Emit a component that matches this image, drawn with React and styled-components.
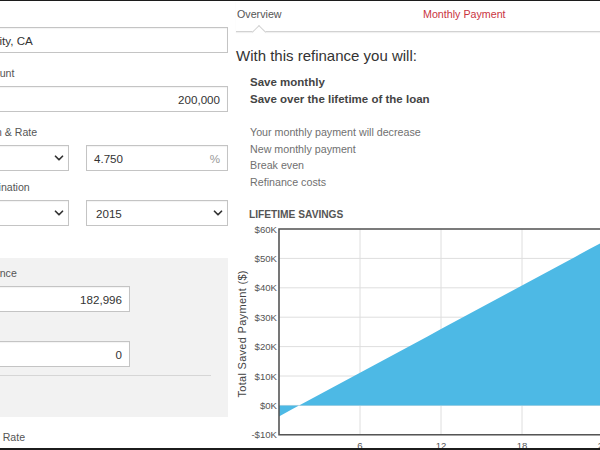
import React from 'react';
import styled, { createGlobalStyle } from 'styled-components';
import { ChevronDown } from 'lucide-react';

const GlobalStyle = createGlobalStyle`
  html, body {
    margin: 0;
    padding: 0;
    background: #fff;
    overflow: hidden;
  }
  body {
    font-family: "Liberation Sans", Arial, sans-serif;
    color: #333;
  }
`;

const savings = [];
for (let t = 0; t <= 25; t++) {
  savings.push({ year: t, value: -3.74 + 2.474 * t });
}

function App() {
  return (
    <Frame>
      <GlobalStyle />
      <Page>
        <FormColumn>
          <Field $gap={12}>
            <Label>Location</Label>
            <Box $pad={2}>
              <Value>Foster City, CA</Value>
            </Box>
          </Field>

          <Field $gap={12}>
            <Label>Loan Amount</Label>
            <Box>
              <Value $right>200,000</Value>
            </Box>
          </Field>

          <Field $gap={8}>
            <Label>Loan Term &amp; Rate</Label>
            <Pair>
              <Box $select>
                <Value>30 yr</Value>
                <ChevronDown size={14} strokeWidth={3} color="#333" />
              </Box>
              <Box>
                <Value>4.750</Value>
                <Suffix>%</Suffix>
              </Box>
            </Pair>
          </Field>

          <Field $gap={32}>
            <Label>Loan Origination</Label>
            <Pair>
              <Box $select>
                <Value>Jan</Value>
                <ChevronDown size={14} strokeWidth={3} color="#333" />
              </Box>
              <Box $select>
                <Value>2015</Value>
                <ChevronDown size={14} strokeWidth={3} color="#333" />
              </Box>
            </Pair>
          </Field>

          <Panel>
            <Field $gap={8}>
              <Label>Loan Balance</Label>
              <Box $width={178}>
                <Value $right>182,996</Value>
              </Box>
            </Field>
            <Field $gap={8}>
              <Label>Points</Label>
              <Box $width={178}>
                <Value $right>0</Value>
              </Box>
            </Field>
            <Divider />
          </Panel>

          <Field $gap={0} $top={12}>
            <Label>New Loan Rate</Label>
          </Field>
        </FormColumn>

        <ResultColumn>
          <TabBar>
            <Tab $active>Overview</Tab>
            <Tab $accent>Monthly Payment</Tab>
            <Tab>Amortization</Tab>
          </TabBar>

          <Heading>With this refinance you will:</Heading>

          <Highlights>
            <li>Save monthly</li>
            <li>Save over the lifetime of the loan</li>
          </Highlights>

          <Facts>
            <li>Your monthly payment will decrease</li>
            <li>New monthly payment</li>
            <li>Break even</li>
            <li>Refinance costs</li>
          </Facts>

          <SectionTitle>LIFETIME SAVINGS</SectionTitle>
          <SavingsChart data={savings} />
        </ResultColumn>
      </Page>
    </Frame>
  );
}

function SavingsChart({ data }) {
  const left = 43;
  const top = 7;
  const unitX = 13.5;
  const unitY = 2.94;
  const maxYear = 25;
  const x = (t) => left + t * unitX;
  const y = (v) => top + (60 - v) * unitY;
  const bottom = y(-10);
  const right = x(maxYear);
  const ticksY = [60, 50, 40, 30, 20, 10, 0, -10];
  const ticksX = [6, 12, 18, 24];

  const area = [
    `${x(0)},${y(0)}`,
    ...data.map((d) => `${x(d.year)},${y(d.value)}`),
    `${x(data[data.length - 1].year)},${y(0)}`,
  ].join(' ');

  const fmt = (v) => (v < 0 ? `-$${-v}K` : `$${v}K`);

  return (
    <ChartSvg width="460" height="228" viewBox="0 0 460 228">
      {ticksY.map((v) => (
        <line key={v} x1={left} x2={right} y1={y(v)} y2={y(v)} stroke="#dedede" strokeWidth="1" />
      ))}
      {ticksX.map((t) => (
        <line key={t} x1={x(t)} x2={x(t)} y1={top} y2={bottom} stroke="#dedede" strokeWidth="1" />
      ))}
      <polygon points={area} fill="#4db9e5" />
      <path
        d={`M${right} ${top} H${left} V${bottom} H${right}`}
        fill="none"
        stroke="#555"
        strokeWidth="1.6"
      />
      {ticksY.map((v) => (
        <text key={v} x={left - 2} y={y(v) + 3.5} textAnchor="end" fontSize="9.6" fill="#555">
          {fmt(v)}
        </text>
      ))}
      {ticksX.map((t) => (
        <text key={t} x={x(t)} y={227} textAnchor="middle" fontSize="9.6" fill="#555">
          {t}
        </text>
      ))}
      <text
        transform={`translate(10 ${(top + bottom) / 2 + 2}) rotate(-90)`}
        textAnchor="middle"
        fontSize="11"
        fill="#444"
        letterSpacing="0.3"
      >
        Total Saved Payment ($)
      </text>
    </ChartSvg>
  );
}

const Frame = styled.div`
  width: 600px;
  height: 450px;
  box-sizing: border-box;
  border-top: 1px solid #1c1c1c;
  border-bottom: 2px solid #1c1c1c;
  overflow: hidden;
`;

const Page = styled.div`
  display: flex;
  gap: 8px;
  width: 780px;
  margin-left: -48px;
`;

const FormColumn = styled.div`
  flex: 0 0 276px;
  padding-top: 5px;
`;

const Field = styled.div`
  margin-top: ${(p) => p.$top || 0}px;
  margin-bottom: ${(p) => p.$gap}px;
`;

const Label = styled.div`
  font-size: 10.6px;
  line-height: 16px;
  color: #555;
  margin-bottom: 5px;
  white-space: nowrap;
`;

const Pair = styled.div`
  display: grid;
  grid-template-columns: 117px 1fr;
  gap: 17px;
`;

const Box = styled.div`
  display: flex;
  align-items: center;
  box-sizing: border-box;
  height: 26px;
  width: ${(p) => (p.$width ? `${p.$width}px` : 'auto')};
  padding: 0 ${(p) => (p.$select ? 2 : 7)}px 0 ${(p) => p.$pad || (p.$select ? 9 : 7)}px;
  background: #fff;
  border: 1px solid #c4c4c4;
  box-shadow: inset 0 1px 1px rgba(0, 0, 0, 0.05);
`;

const Value = styled.span`
  flex: 1;
  font-size: 11.6px;
  color: #333;
  text-align: ${(p) => (p.$right ? 'right' : 'left')};
  white-space: nowrap;
`;

const Suffix = styled.span`
  font-size: 11.6px;
  color: #9a9a9a;
`;

const Panel = styled.div`
  background: #f2f2f2;
  margin-left: -17px;
  padding: 7px 17px 41px 17px;
`;

const Divider = styled.div`
  height: 1px;
  background: #d6d6d6;
`;

const ResultColumn = styled.div`
  flex: 0 0 470px;
`;

const TabBar = styled.div`
  display: grid;
  grid-template-columns: 186px 186px 1fr;
  box-sizing: border-box;
  height: 31px;
  border-bottom: 1px solid #d2d2d2;
  box-shadow: 0 1px 1px rgba(0, 0, 0, 0.06);
`;

const Tab = styled.div`
  position: relative;
  padding: 5px 0 0 1px;
  font-size: 10.7px;
  line-height: 16px;
  color: ${(p) => (p.$accent ? '#c9343f' : '#555')};

  ${(p) =>
    p.$active &&
    `
    &::after {
      content: '';
      position: absolute;
      left: 18px;
      top: 26px;
      width: 9px;
      height: 9px;
      background: #fff;
      border-top: 1px solid #d2d2d2;
      border-left: 1px solid #d2d2d2;
      transform: rotate(45deg);
    }
  `}
`;

const Heading = styled.h2`
  margin: 15px 0 0 0;
  font-size: 15px;
  line-height: 18px;
  font-weight: normal;
  color: #333;
`;

const Highlights = styled.ul`
  list-style: none;
  margin: 9px 0 0 0;
  padding-left: 14px;
  font-size: 11.5px;
  line-height: 17px;
  font-weight: bold;
  color: #444;
`;

const Facts = styled.ul`
  list-style: none;
  margin: 16px 0 0 0;
  padding-left: 14px;
  font-size: 10.7px;
  line-height: 16.6px;
  color: #707070;
`;

const SectionTitle = styled.div`
  margin: 18px 0 0 13px;
  font-size: 10.2px;
  line-height: 14px;
  font-weight: bold;
  color: #555;
`;

const ChartSvg = styled.svg`
  display: block;
  font-family: "Liberation Sans", Arial, sans-serif;
`;

export default App;
